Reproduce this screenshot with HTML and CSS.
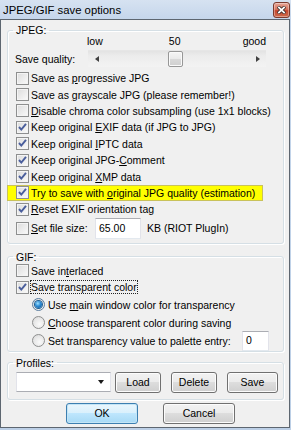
FILE: index.html
```html
<!DOCTYPE html>
<html>
<head>
<meta charset="utf-8">
<title>JPEG/GIF save options</title>
<link rel="stylesheet" href="styles.css">
</head>
<body>
<div class="window">
  <div class="titlebar">
    <span class="title">JPEG/GIF save options</span>
    <span class="close">
      <svg width="9" height="8" viewBox="0 0 9 8"><path d="M1 0.5 L8 7.5 M8 0.5 L1 7.5" stroke="#3a2a28" stroke-width="3.4"/><path d="M1.3 0.8 L7.7 7.2 M7.7 0.8 L1.3 7.2" stroke="#fff" stroke-width="1.8"/></svg>
    </span>
  </div>
  <div class="client">
    <fieldset class="group g-jpeg">
      <legend>JPEG:</legend>
      <div class="scale"><span>low</span><span class="mid">50</span><span>good</span></div>
      <div class="quality">
        <span class="q-label">Save quality:</span>
        <div class="scrollbar">
          <span class="sb-btn"><span class="arrow-left"></span></span>
          <span class="sb-track"><span class="thumb"></span></span>
          <span class="sb-btn"><span class="arrow-right"></span></span>
        </div>
      </div>
      <div class="checks">
        <div class="row"><span class="cb"></span><span>Save as <u>p</u>rogressive JPG</span></div>
        <div class="row"><span class="cb"></span><span>Save as <u>g</u>rayscale JPG (please remember!)</span></div>
        <div class="row"><span class="cb"></span><span><u>D</u>isable chroma color subsampling (use 1x1 blocks)</span></div>
        <div class="row"><span class="cb checked"><svg width="11" height="11" viewBox="0 0 11 11"><path d="M2 5 L4.3 7.6 L9 1.8" fill="none" stroke="#4a5e9c" stroke-width="1.9"/></svg></span><span>Keep original <u>E</u>XIF data (if JPG to JPG)</span></div>
        <div class="row"><span class="cb checked"><svg width="11" height="11" viewBox="0 0 11 11"><path d="M2 5 L4.3 7.6 L9 1.8" fill="none" stroke="#4a5e9c" stroke-width="1.9"/></svg></span><span>Keep original <u>I</u>PTC data</span></div>
        <div class="row"><span class="cb checked"><svg width="11" height="11" viewBox="0 0 11 11"><path d="M2 5 L4.3 7.6 L9 1.8" fill="none" stroke="#4a5e9c" stroke-width="1.9"/></svg></span><span>Keep original JPG-<u>C</u>omment</span></div>
        <div class="row"><span class="cb checked"><svg width="11" height="11" viewBox="0 0 11 11"><path d="M2 5 L4.3 7.6 L9 1.8" fill="none" stroke="#4a5e9c" stroke-width="1.9"/></svg></span><span>Keep original <u>X</u>MP data</span></div>
        <div class="row hl"><span class="cb checked"><svg width="11" height="11" viewBox="0 0 11 11"><path d="M2 5 L4.3 7.6 L9 1.8" fill="none" stroke="#4a5e9c" stroke-width="1.9"/></svg></span><span class="hl-text">Try to save with <u>o</u>riginal JPG quality (estimation)</span></div>
        <div class="row"><span class="cb checked"><svg width="11" height="11" viewBox="0 0 11 11"><path d="M2 5 L4.3 7.6 L9 1.8" fill="none" stroke="#4a5e9c" stroke-width="1.9"/></svg></span><span><u>R</u>eset EXIF orientation tag</span></div>
        <div class="row row-size"><span class="cb"></span><span class="size-label"><u>S</u>et file size:</span><span class="edit edit-size">65.00</span><span>KB (RIOT PlugIn)</span></div>
      </div>
    </fieldset>

    <fieldset class="group g-gif">
      <legend>GIF:</legend>
      <div class="row row-gif"><span class="cb"></span><span>Save in<u>t</u>erlaced</span></div>
      <div class="row row-gif"><span class="cb checked"><svg width="11" height="11" viewBox="0 0 11 11"><path d="M2 5 L4.3 7.6 L9 1.8" fill="none" stroke="#4a5e9c" stroke-width="1.9"/></svg></span><span class="focus">Save transparent color</span></div>
      <div class="row row-radio"><span class="rb selected"><span class="dot"></span></span><span>Use <u>m</u>ain window color for transparency</span></div>
      <div class="row row-radio"><span class="rb"></span><span><u>C</u>hoose transparent color during saving</span></div>
      <div class="row row-radio"><span class="rb"></span><span class="pal-label">Set transparency value to palette entry:</span><span class="edit edit-pal">0</span></div>
    </fieldset>

    <fieldset class="group g-prof">
      <legend>Profiles:</legend>
      <div class="prof-row">
        <span class="combo"><span class="combo-arrow"></span></span>
        <span class="btn btn-load">Load</span>
        <span class="btn btn-delete">Delete</span>
        <span class="btn btn-save">Save</span>
      </div>
    </fieldset>

    <div class="actions">
      <span class="btn btn-ok">OK</span>
      <span class="btn btn-cancel">Cancel</span>
    </div>
  </div>
</div>
</body>
</html>
```

FILE: styles.css
```css
* { box-sizing: border-box; }
html, body { margin: 0; padding: 0; }
body {
  width: 291px;
  height: 430px;
  overflow: hidden;
  font-family: "Liberation Sans", Arial, sans-serif;
  font-size: 10.5px;
  color: #000;
  background: #bfd0e7;
}
u { text-decoration: underline; text-underline-offset: 1px; }

.window {
  width: 291px;
  height: 430px;
  display: flex;
  flex-direction: column;
  background: linear-gradient(to bottom, #d6e2f1 0px, #c5d6eb 19px, #bccfe6 100%);
}

.titlebar {
  height: 19px;
  flex: none;
  display: flex;
  align-items: center;
  justify-content: space-between;
  padding: 0 1px 0 3px;
}
.title {
  font-size: 11.3px;
  line-height: 14px;
  padding-top: 1px;
  color: #000;
}
.close {
  width: 17px;
  height: 16px;
  border: 1px solid #7b3a2e;
  border-radius: 3px;
  background: linear-gradient(to bottom, #e7a799 0%, #d8755f 45%, #c4452c 55%, #cf6c4d 100%);
  box-shadow: inset 0 0 0 1px rgba(255,255,255,0.35);
  display: flex;
  align-items: center;
  justify-content: center;
}

.client {
  flex: 1;
  margin: 0 1px 2px 0;
  border: 1px solid #5d6670;
  background: #f0f0f0;
  padding: 0 5px 0 6px;
  display: flex;
  flex-direction: column;
}

.group {
  margin: 0;
  border: 1px solid #d5dfe5;
  border-radius: 3px;
  padding: 0 6px 0 8px;
  min-width: 0;
  box-shadow: 1px 1px 0 #fff, inset 1px 1px 0 #fff;
}
.group legend {
  margin-left: -3px;
  padding: 0 3px;
  font-size: 10.5px;
  line-height: 12px;
  height: 12px;
}
.g-jpeg { margin-top: 4px; padding-bottom: 4px; }
.g-gif { margin-top: 7px; padding-bottom: 1px; }
.g-prof { margin-top: 5px; padding-top: 3px; padding-bottom: 6px; }

.scale {
  height: 11px;
  line-height: 11px;
  margin-left: 71px;
  width: 179px;
  display: flex;
  justify-content: space-between;
}
.scale .mid { margin-left: 4px; }

.quality {
  margin-top: 3px;
  height: 17px;
  display: flex;
  align-items: center;
}
.q-label { width: 73px; margin-left: -1px; flex: none; }
.scrollbar {
  width: 178px;
  height: 17px;
  display: flex;
  background: linear-gradient(to bottom, #e3e3e3 0%, #ececec 30%, #f3f3f3 100%);
  border-top: 1px solid #e6e6e6;
}
.sb-btn {
  width: 17px;
  flex: none;
  display: flex;
  align-items: center;
  justify-content: center;
}
.arrow-left {
  width: 0; height: 0;
  border-top: 3.5px solid transparent;
  border-bottom: 3.5px solid transparent;
  border-right: 4px solid #404040;
}
.arrow-right {
  width: 0; height: 0;
  border-top: 3.5px solid transparent;
  border-bottom: 3.5px solid transparent;
  border-left: 4px solid #404040;
}
.sb-track { flex: 1; display: flex; align-items: stretch; }
.thumb {
  width: 15px;
  margin-left: 63px;
  border: 1px solid #979797;
  border-radius: 2px;
  background: linear-gradient(to bottom, #f6f6f6 0%, #eaeaea 50%, #d9d9d9 51%, #cfcfcf 100%);
  box-shadow: inset 0 0 0 1px #fafafa;
}

.checks {
  margin-top: 3px;
  display: flex;
  flex-direction: column;
  align-items: flex-start;
}
.row {
  height: 16.4px;
  display: flex;
  align-items: center;
  white-space: nowrap;
}
.cb {
  width: 13px;
  height: 13px;
  flex: none;
  margin-right: 2px;
  border: 1px solid #8e8f8f;
  background: linear-gradient(135deg, #dcdcdc 0%, #eeeeee 60%, #fbfbfb 100%);
  box-shadow: inset 0 0 0 1px #f4f4f4;
  display: flex;
  align-items: center;
  justify-content: center;
}
.cb svg { display: block; }

.row.hl {
  margin-left: -9px;
  padding-left: 8px;
  padding-right: 7px;
  background: #ffff00;
  border: 1px solid #c9c25a;
}

.row-size { height: 21px; }
.size-label { width: 64px; flex: none; }
.edit {
  background: #fff;
  border: 1px solid #abadb3;
  border-left-color: #e2e3ea;
  border-right-color: #e2e3ea;
  border-bottom-color: #e3e9ef;
  display: flex;
  align-items: center;
  flex: none;
}
.edit-size { width: 46px; height: 21px; padding-left: 3px; margin-right: 6px; }

.row-gif { height: 16.5px; }
.focus { outline: 1px dotted #222; line-height: 12px; }
.row-radio { height: 18px; padding-left: 16px; }
.rb {
  width: 13px;
  height: 13px;
  flex: none;
  margin-right: 3px;
  border: 1px solid #8e8f8f;
  border-radius: 50%;
  background: radial-gradient(circle at 60% 65%, #fafafa 0%, #e6e6e6 60%, #d2d2d2 100%);
  display: flex;
  align-items: center;
  justify-content: center;
}
.rb.selected { border-color: #5c7ea0; }
.dot {
  width: 7px;
  height: 7px;
  border-radius: 50%;
  background: radial-gradient(circle at 40% 35%, #9ee2ff 0%, #2a8ad4 45%, #0c4f8d 100%);
  box-shadow: 0 0 0 1px #1b5e93;
}
.pal-label { width: 194px; flex: none; }
.edit-pal { width: 27px; height: 20px; padding-left: 3px; align-items: flex-start; padding-top: 2px; }

.prof-row {
  height: 21px;
  display: flex;
  align-items: center;
}
.combo {
  width: 95px;
  height: 20px;
  background: #fff;
  border: 1px solid #abadb3;
  border-left-color: #e2e3ea;
  border-right-color: #e2e3ea;
  display: flex;
  align-items: center;
  justify-content: flex-end;
  padding-right: 6px;
  flex: none;
}
.combo-arrow {
  width: 0; height: 0;
  border-left: 3.5px solid transparent;
  border-right: 3.5px solid transparent;
  border-top: 4px solid #1a1a1a;
}

.btn {
  height: 21px;
  display: flex;
  align-items: center;
  justify-content: center;
  border: 1px solid #707070;
  border-radius: 3px;
  background: linear-gradient(to bottom, #f2f2f2 0%, #ebebeb 49%, #dddddd 50%, #cfcfcf 100%);
  box-shadow: inset 0 0 0 1px #fcfcfc;
  flex: none;
}
.btn-load { width: 46px; margin-left: 4px; }
.btn-delete { width: 46px; margin-left: 10px; }
.btn-save { width: 51px; margin-left: 10px; }

.actions {
  margin-top: 3px;
  display: flex;
  padding-left: 59px;
}
.btn-ok {
  width: 72px;
  border-color: #3c7fb1;
  background: linear-gradient(to bottom, #eaf6fd 0%, #d9f0fc 49%, #bee6fd 50%, #a7d9f5 100%);
  box-shadow: inset 0 0 0 1px #c4e5f6;
}
.btn-cancel { width: 72px; margin-left: 25px; }
```
